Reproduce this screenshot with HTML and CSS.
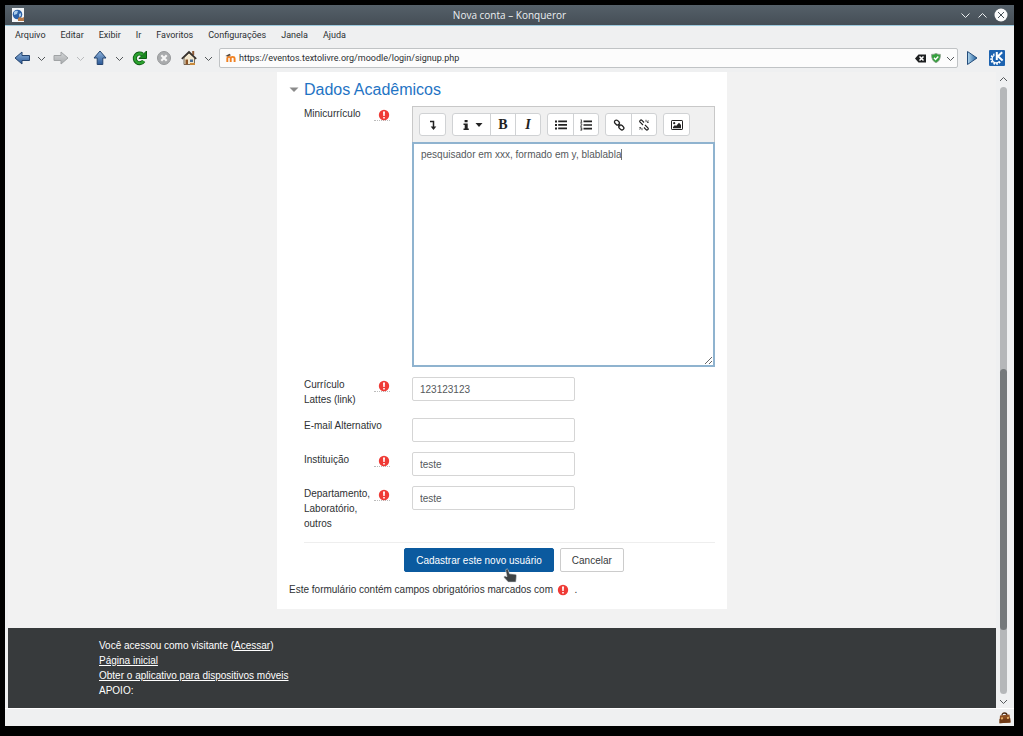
FILE: index.html
```html
<!DOCTYPE html>
<html lang="pt-BR">
<head>
<meta charset="utf-8">
<title>Nova conta – Konqueror</title>
<link rel="stylesheet" href="styles.css">
</head>
<body>
<svg class="defs" aria-hidden="true">
  <defs>
    <linearGradient id="blue" x1="0" y1="0" x2="0" y2="1"><stop offset="0" stop-color="#8fb4dc"/><stop offset="1" stop-color="#2a5896"/></linearGradient>
    <linearGradient id="gray" x1="0" y1="0" x2="0" y2="1"><stop offset="0" stop-color="#d4d6d8"/><stop offset="1" stop-color="#a8abad"/></linearGradient>
    <linearGradient id="play" x1="0" y1="0" x2="1" y2="0"><stop offset="0" stop-color="#b4d8ee"/><stop offset="1" stop-color="#1d5d9c"/></linearGradient>
    <symbol id="chev" viewBox="0 0 9 9"><path d="M1 3l3.500 3.500L8 3" fill="none" stroke="currentColor"/></symbol>
    <symbol id="req" viewBox="0 0 12 12"><circle cx="6" cy="6" r="5.200" fill="#ef3b36"/><path d="M5 2.400h2l-.3 4.600H5.300zM5.200 8h1.600v1.600H5.200z" fill="#fff"/></symbol>
  </defs>
</svg>
<div class="window">
  <header class="titlebar">
    <svg class="app-icon" viewBox="0 0 14 14"><path d="M1 0h12v14H1z" fill="#f4f6f8"/><circle cx="6.500" cy="6.500" r="4.800" fill="#2c62a8"/><path d="M3 4q2-2 4-1l-1 3-3 1zM8 6l2-1v3l-2 1z" fill="#a9cbea"/><path d="M7 10l2-1 2 1 2-1v4H7z" fill="#b57a4b"/></svg>
    <h1 class="window-title">Nova conta – Konqueror</h1>
    <div class="window-buttons">
      <button class="plain" aria-label="Minimizar"><svg width="11" height="11" viewBox="0 0 11 11"><path d="M1.500 3.500l4 4 4-4" fill="none" stroke="#eceff1"/></svg></button>
      <button class="plain" aria-label="Maximizar"><svg width="11" height="11" viewBox="0 0 11 11"><path d="M1.500 7.500l4-4 4 4" fill="none" stroke="#eceff1"/></svg></button>
      <button class="plain" aria-label="Fechar"><svg width="14" height="14" viewBox="0 0 14 14"><circle cx="7" cy="7" r="6.500" fill="#fafafa"/><path d="M4 4l6 6M10 4l-6 6" stroke="#475057"/></svg></button>
    </div>
  </header>
  <nav class="menubar">
    <button class="plain">Arquivo</button><button class="plain">Editar</button><button class="plain">Exibir</button><button class="plain">Ir</button><button class="plain">Favoritos</button><button class="plain">Configurações</button><button class="plain">Janela</button><button class="plain">Ajuda</button>
  </nav>
  <div class="toolbar">
    <button class="plain tool" aria-label="Voltar"><svg viewBox="0 0 18 18"><path d="M2 9l7-6v3.500h7.500v5H9V15z" fill="url(#blue)" stroke="#24446f"/></svg></button>
    <button class="plain drop" aria-label="Histórico anterior"><svg><use href="#chev"/></svg></button>
    <button class="plain tool" aria-label="Avançar"><svg viewBox="0 0 18 18"><path d="M16 9L9 3v3.500H2v5h7V15z" fill="url(#gray)" stroke="#a0a3a5"/></svg></button>
    <button class="plain drop faded" aria-label="Histórico seguinte"><svg><use href="#chev"/></svg></button>
    <button class="plain tool" aria-label="Subir"><svg viewBox="0 0 18 18"><path d="M9 2l6 7h-3.200v6.500H6.200V9H3z" fill="url(#blue)" stroke="#24446f"/></svg></button>
    <button class="plain drop" aria-label="Níveis acima"><svg><use href="#chev"/></svg></button>
    <button class="plain tool" aria-label="Recarregar"><svg viewBox="0 0 18 18"><path d="M12.600 5.600A4.800 4.800 0 1 0 13.600 12" fill="none" stroke="#0c5a12" stroke-width="4"/><path d="M16.500 2v7.500H9z" fill="#17881d" stroke="#0c5a12"/><path d="M12.600 5.600A4.800 4.800 0 1 0 13.600 12" fill="none" stroke="#2ba22e" stroke-width="2.400"/></svg></button>
    <button class="plain tool stop" aria-label="Parar"><svg viewBox="0 0 18 18"><circle cx="9" cy="9" r="6.500" fill="#a9abad" stroke="#97999b"/><path d="M6.300 6.300l5.400 5.400M11.700 6.300l-5.400 5.400" stroke="#f6f6f6" stroke-width="2.200"/></svg></button>
    <button class="plain tool" aria-label="Início"><svg viewBox="0 0 18 18"><path d="M4 8.500v7h10.500v-7L9 4z" fill="#f1e6cd" stroke="#55493a" stroke-width=".8"/><path d="M12.200 2h2v4h-2z" fill="#8e5a35"/><path d="M1.800 9.800L9 3l7.200 6.800" fill="none" stroke="#37322e" stroke-width="1.700"/><path d="M5.500 10.500h2.500v5H5.500z" fill="#8c5527"/><path d="M10 10.500h3v2.500h-3z" fill="#4b6f96"/><path d="M10 14h5v2h-5z" fill="#c98a3c"/></svg></button>
    <button class="plain drop" aria-label="Opções de início"><svg><use href="#chev"/></svg></button>
    <div class="location">
      <svg class="favicon" viewBox="0 0 12 10"><path d="M2.300 9V5.500q0-1.600 1.700-1.600t1.700 1.600V9M5.700 5.500q0-1.600 1.900-1.600t2 1.600V9" fill="none" stroke="#f08021" stroke-width="1.900"/><path d="M.4 3L4.500.8 6 2.200 2.500 3.600z" fill="#56483c"/></svg>
      <input class="url" aria-label="Endereço" value="https://eventos.textolivre.org/moodle/login/signup.php">
      <svg class="clear" viewBox="0 0 11 9"><path d="M0 4.500L3.500.5H11v8H3.500z" fill="#1d1f20"/><path d="M4.500 2.500l4 4M8.500 2.500l-4 4" stroke="#fff" stroke-width="1.500"/></svg>
      <svg class="shield" viewBox="0 0 10 10"><path d="M5 .4q2 1.200 4.400 1Q9.800 7.500 5 9.700.2 7.500.6 1.400 3 1.600 5 .4z" fill="#34a13c" stroke="#8c9a8d" stroke-width=".8"/><path d="M3 4.800l1.500 1.600L7.300 3.400" fill="none" stroke="#fff" stroke-width="1.400"/></svg>
      <button class="plain drop" aria-label="Endereços recentes"><svg><use href="#chev"/></svg></button>
    </div>
    <div class="toolbar-end">
      <button class="plain" aria-label="Ir"><svg width="16" height="16" viewBox="0 0 16 16"><path d="M3.500 1.500l9.500 6.500-9.500 6.500z" fill="url(#play)" stroke="#244d7b"/></svg></button>
      <button class="plain" aria-label="KDE"><svg width="16" height="16" viewBox="0 0 16 16"><rect width="16" height="16" rx="1" fill="#1d63b0"/><circle cx="7" cy="9" r="4.700" fill="none" stroke="#fff" stroke-width="2.200" stroke-dasharray="1.600 1.100"/><circle cx="7" cy="9" r="3.900" fill="#1d63b0" stroke="#fff" stroke-width="1.300"/><path d="M5.500 0h9.500v11H5.500z" fill="#1d63b0"/><path d="M7.800 2v8M13.200 2.200L9 6.300l4.600 4.200" fill="none" stroke="#fff" stroke-width="2"/></svg></button>
    </div>
  </div>
  <div class="viewport">
    <div class="page">
      <main class="card">
        <form>
          <h2 class="section-title"><svg viewBox="0 0 9 6"><path d="M0 .5h9L4.500 5z" fill="#8b8b8b"/></svg>Dados Acadêmicos</h2>
          <div class="fields">
            <div class="row">
              <div class="label"><span id="bio">Minicurrículo</span><span class="required"><svg><use href="#req"/></svg></span></div>
              <div class="editor">
                <div class="editor-bar">
                  <div class="group"><button type="button" aria-label="Mostrar mais botões"><svg viewBox="0 0 12 12"><path d="M3 2.500h3.500v6" fill="none" stroke="#222" stroke-width="1.500"/><path d="M3.700 7.500h5.600L6.500 11z" fill="#222"/></svg></button></div>
                  <div class="group">
                    <button type="button" class="wide" aria-label="Estilos de parágrafo"><svg viewBox="0 0 12 12"><path d="M4.600 1h3v2.200h-3zM3.500 4.500h4.200v5h1.100V11H3.500V9.500h1.200V6H3.500z" fill="#222"/></svg><svg class="small" viewBox="0 0 8 6"><path d="M.5 1h7L4 5z" fill="#222"/></svg></button>
                    <button type="button" class="serif bold">B</button>
                    <button type="button" class="serif italic">I</button>
                  </div>
                  <div class="group">
                    <button type="button" aria-label="Lista com marcadores"><svg viewBox="0 0 12 12"><path d="M0 1.500h2v2H0zM0 5h2v2H0zM0 8.500h2v2H0zM3.200 1.600H12v1.700H3.200zM3.200 5.100H12v1.700H3.200zM3.200 8.600H12v1.700H3.200z" fill="#222"/></svg></button>
                    <button type="button" aria-label="Lista numerada"><svg viewBox="0 0 12 12"><path d="M3.500 1.600H12v1.600H3.500zM3.500 5.200H12v1.600H3.500zM3.500 8.800H12v1.600H3.500z" fill="#222"/><path d="M.6.8h.8v2.400M.4 3.300H2.200M.4 4.800H1.800v1L.4 7.200h1.700M.4 8.700H1.800v2.500H.4M.6 10H1.800" fill="none" stroke="#222" stroke-width=".8"/></svg></button>
                  </div>
                  <div class="group">
                    <button type="button" aria-label="Link"><svg viewBox="0 0 12 12"><g fill="none" stroke="#222" stroke-width="1.300"><rect x="1.200" y="1.700" width="5.500" height="3.800" rx="1.900" transform="rotate(45 4 3.600)"/><rect x="5.600" y="6.500" width="5.500" height="3.800" rx="1.900" transform="rotate(45 8.300 8.400)"/><path d="M5 5l2.300 2.300"/></g></svg></button>
                    <button type="button" aria-label="Desfazer link"><svg viewBox="0 0 12 12"><g fill="none" stroke="#222" stroke-width="1.200"><path d="M5 6L2.100 3.200q-.8-1 .1-1.800t1.800 0L6 3.500M7 6l2.900 2.800q.8 1-.1 1.800t-1.800 0L6 8.500"/><path d="M8 .8v2M9 3.600l2-.6M8.600 3.100L10.300 1.400M4 11.200v-2M3 8.400l-2 .6M3.400 8.900l-1.700 1.700" stroke-width=".8"/></g></svg></button>
                  </div>
                  <div class="group"><button type="button" aria-label="Imagem"><svg viewBox="0 0 12 12"><rect x=".5" y="1.500" width="11" height="9" rx=".6" fill="none" stroke="#222"/><circle cx="3.200" cy="4.200" r="1.100" fill="#222"/><path d="M2 9.300V8l2-2 1 1 3-3.200L10 6v3.300z" fill="#222"/></svg></button></div>
                </div>
                <div class="editor-text" role="textbox" aria-multiline="true" aria-labelledby="bio" contenteditable="true" spellcheck="false"><span class="caret">pesquisador em xxx, formado em y, blablabla</span></div>
              </div>
            </div>
            <div class="row">
              <div class="label"><label for="lattes">Currículo Lattes (link)</label><span class="required"><svg><use href="#req"/></svg></span></div>
              <input class="text" id="lattes" value="123123123">
            </div>
            <div class="row">
              <div class="label"><label for="email">E-mail Alternativo</label></div>
              <input class="text" id="email" type="email">
            </div>
            <div class="row">
              <div class="label"><label for="inst">Instituição</label><span class="required"><svg><use href="#req"/></svg></span></div>
              <input class="text" id="inst" value="teste">
            </div>
            <div class="row">
              <div class="label"><label for="dept">Departamento, Laboratório, outros</label><span class="required"><svg><use href="#req"/></svg></span></div>
              <input class="text" id="dept" value="teste">
            </div>
          </div>
          <div class="actions">
            <button type="button" class="btn primary">Cadastrar este novo usuário<svg class="pointer" viewBox="0 0 14 16"><path d="M3.200 1.300q1.300-.9 2 .5l1.300 4 5.800.5q1.300.2 1.200 1.600l-.6 6.200H5.200L1 9.400q-.4-1.400 1-1.500l2 .8L2.700 2.500q0-.8.5-1.200z" fill="#3f4345" stroke="#d8dde0" stroke-width=".6"/></svg></button>
            <button type="button" class="btn">Cancelar</button>
          </div>
          <p class="note">Este formulário contém campos obrigatórios marcados com <svg><use href="#req"/></svg> .</p>
        </form>
      </main>
      <footer class="footer">
        <div class="footer-inner">
          <div>Você acessou como visitante (<a href="#">Acessar</a>)</div>
          <div><a href="#">Página inicial</a></div>
          <div><a href="#">Obter o aplicativo para dispositivos móveis</a></div>
          <div>APOIO:</div>
        </div>
      </footer>
    </div>
    <div class="scrollbar">
      <svg><path d="M1 6l3.500-3.500L8 6" fill="none" stroke="#55595c"/></svg>
      <div class="track"><div class="thumb"></div></div>
      <svg><use href="#chev"/></svg>
    </div>
  </div>
  <div class="statusbar">
    <svg viewBox="0 0 13 12"><path d="M4 3.500q0-2.500 2.500-2.500T9 3.500" fill="none" stroke="#4a2a14" stroke-width="1.300"/><path d="M2 3.500l9.500-1 1 8-11 .8z" fill="#8d4f22"/><path d="M1.500 7l10.800-.8.2 4.300-11 .8z" fill="#6f3a17"/><path d="M3 5.500l2-.2v2l-2 .2zM9 5l2-.2v2L9 7z" fill="#e0aa62"/></svg>
  </div>
</div>
</body>
</html>
```
FILE: styles.css
```css
* { box-sizing: border-box; }
body {
  margin: 0;
  padding: 5px 9px 10px 5px;
  min-height: 100vh;
  display: flex;
  background: #000;
  font: 10px/15px "Liberation Sans", Arial, sans-serif;
  color: #373a3c;
}
h1, h2, p, form { margin: 0; }
svg { display: block; flex: none; }
button, input { font: inherit; color: inherit; }
.defs { position: absolute; width: 0; height: 0; }
.plain { padding: 0; border: 0; background: none; }
.window {
  flex: 1;
  min-width: 0;
  display: flex;
  flex-direction: column;
  background: #eff0f1;
}
.titlebar {
  height: 21px;
  display: grid;
  grid-template-columns: 1fr auto 1fr;
  align-items: center;
  padding: 0 6px;
  background: linear-gradient(#556069, #454e56);
  border-bottom: 1px solid #9cc9dd;
}
.app-icon { width: 14px; height: 14px; }
.window-title { font: 10px/14px "Open Sans", sans-serif; color: #eceff1; }
.window-buttons { display: flex; justify-content: flex-end; align-items: center; gap: 6px; }
.menubar {
  display: flex;
  gap: 15px;
  padding: 2px 10px;
  font: 9px/15px Roboto, sans-serif;
  color: #2b2f31;
}
.toolbar {
  display: flex;
  align-items: center;
  gap: 6px;
  padding: 3px 9px 4px 8px;
}
.tool svg { width: 18px; height: 18px; }
.stop { padding: 0 1px; }
.drop { color: #54585b; }
.drop svg { width: 9px; height: 9px; }
.faded { color: #b9bbbd; }
.location {
  flex: 1;
  min-width: 0;
  height: 20px;
  display: flex;
  align-items: center;
  gap: 5px;
  padding: 0 2px 0 5px;
  background: #fcfcfc;
  border: 1px solid #c0c3c5;
  border-radius: 2px;
}
.favicon { width: 12px; height: 10px; }
.clear { width: 11px; height: 9px; }
.shield { width: 10px; height: 10px; }
.url {
  flex: 1;
  min-width: 0;
  margin-left: -5px;
  padding: 0 2px;
  border: 0;
  outline: 0;
  background: none;
  font: 9px/15px Roboto, sans-serif;
  color: #2b2f31;
}
.toolbar-end { display: flex; gap: 9px; }
.viewport { flex: 1; display: flex; padding: 0 3px; }
.page {
  flex: 1;
  min-width: 0;
  display: flex;
  flex-direction: column;
  gap: 19px;
  background: #f2f2f2;
}
.card {
  flex: 1;
  width: 100%;
  max-width: 450px;
  margin: 0 auto;
  padding: 8px 12px 0;
  background: #fff;
}
.section-title {
  display: flex;
  align-items: center;
  gap: 5px;
  font-size: 16px;
  font-weight: 400;
  line-height: 20px;
  color: #1f74c4;
}
.section-title svg { width: 10px; height: 6px; }
.fields {
  display: flex;
  flex-direction: column;
  gap: 10px;
  margin-left: 15px;
  padding: 6px 0 10px;
  border-bottom: 1px solid #eee;
}
.row { display: grid; grid-template-columns: 108px 1fr; align-items: start; }
.label {
  display: flex;
  justify-content: space-between;
  align-items: flex-start;
  gap: 1px;
  padding: 0 22px 1px 0;
  color: #2e3133;
}
.label label { flex: 1; min-width: 0; }
.required {
  display: flex;
  justify-content: flex-end;
  width: 16px;
  margin-top: 3px;
  border-bottom: 1px dotted #bbb;
}
.required svg, .note svg { width: 12px; height: 12px; }
.required svg { margin-bottom: -1px; }
.editor-bar {
  display: flex;
  flex-wrap: wrap;
  gap: 6px;
  padding: 6px;
  background: #f0f0f0;
  border: 1px solid #c8c8c8;
  border-bottom: 0;
}
.group {
  display: flex;
  background: #fff;
  border: 1px solid #d0d2d4;
  border-radius: 3px;
}
.group button {
  display: flex;
  align-items: center;
  justify-content: center;
  width: 25px;
  height: 21px;
  padding: 0;
  border: 0;
  background: none;
  color: #222;
}
.group button + button { border-left: 1px solid #d0d2d4; }
.group .wide { width: 37px; gap: 3px; }
.group svg { width: 12px; height: 12px; }
.group .small { width: 8px; height: 6px; }
.group .serif { font: 14px/20px "Liberation Serif", serif; }
.group .bold { font-weight: 700; }
.group .italic { font-style: italic; font-weight: 700; }
.editor-text {
  height: 225px;
  padding: 3px 7px;
  overflow: auto;
  resize: vertical;
  background: #fff;
  border: 2px solid #8fb3cf;
  outline: 0;
  color: #55595c;
}
.caret { border-right: 1px solid #777; }
.text {
  width: 163px;
  max-width: 100%;
  height: 24px;
  padding: 0 7px;
  border: 1px solid #d5d5d5;
  border-radius: 2px;
  background: #fff;
  color: #55595c;
}
.actions { display: flex; justify-content: center; gap: 6px; padding: 5px 0 0 24px; }
.btn {
  position: relative;
  height: 24px;
  padding: 0 11px;
  border: 1px solid #ccc;
  border-radius: 2px;
  background: #fff;
}
.primary { background: #0b5a9f; border-color: #0b5a9f; color: #fff; }
.pointer { position: absolute; left: 98px; top: 19px; width: 14px; height: 16px; }
.note { padding: 10px 0 12px; color: #2e3133; }
.note svg { display: inline-block; margin: 0 3px 0 1px; vertical-align: -3px; }
.footer { padding: 10px; background: #373a3c; color: #fff; }
.footer-inner { max-width: 806px; margin: 0 auto; }
.footer a { color: inherit; }
.scrollbar {
  display: flex;
  flex-direction: column;
  align-items: center;
  gap: 3px;
  width: 15px;
  padding: 3px 0 2px;
  color: #55595c;
}
.scrollbar svg { width: 9px; height: 9px; }
.track {
  flex: 1;
  width: 7px;
  display: flex;
  flex-direction: column;
  justify-content: flex-end;
  padding-bottom: 64px;
  border-radius: 4px;
  background: #b5b7b9;
}
.thumb { height: 48%; border-radius: 4px; background: #75797b; }
.statusbar { display: flex; justify-content: flex-end; padding: 3px 3px 2px; border-top: 1px solid #fff; }
.statusbar svg { width: 13px; height: 12px; }
```
